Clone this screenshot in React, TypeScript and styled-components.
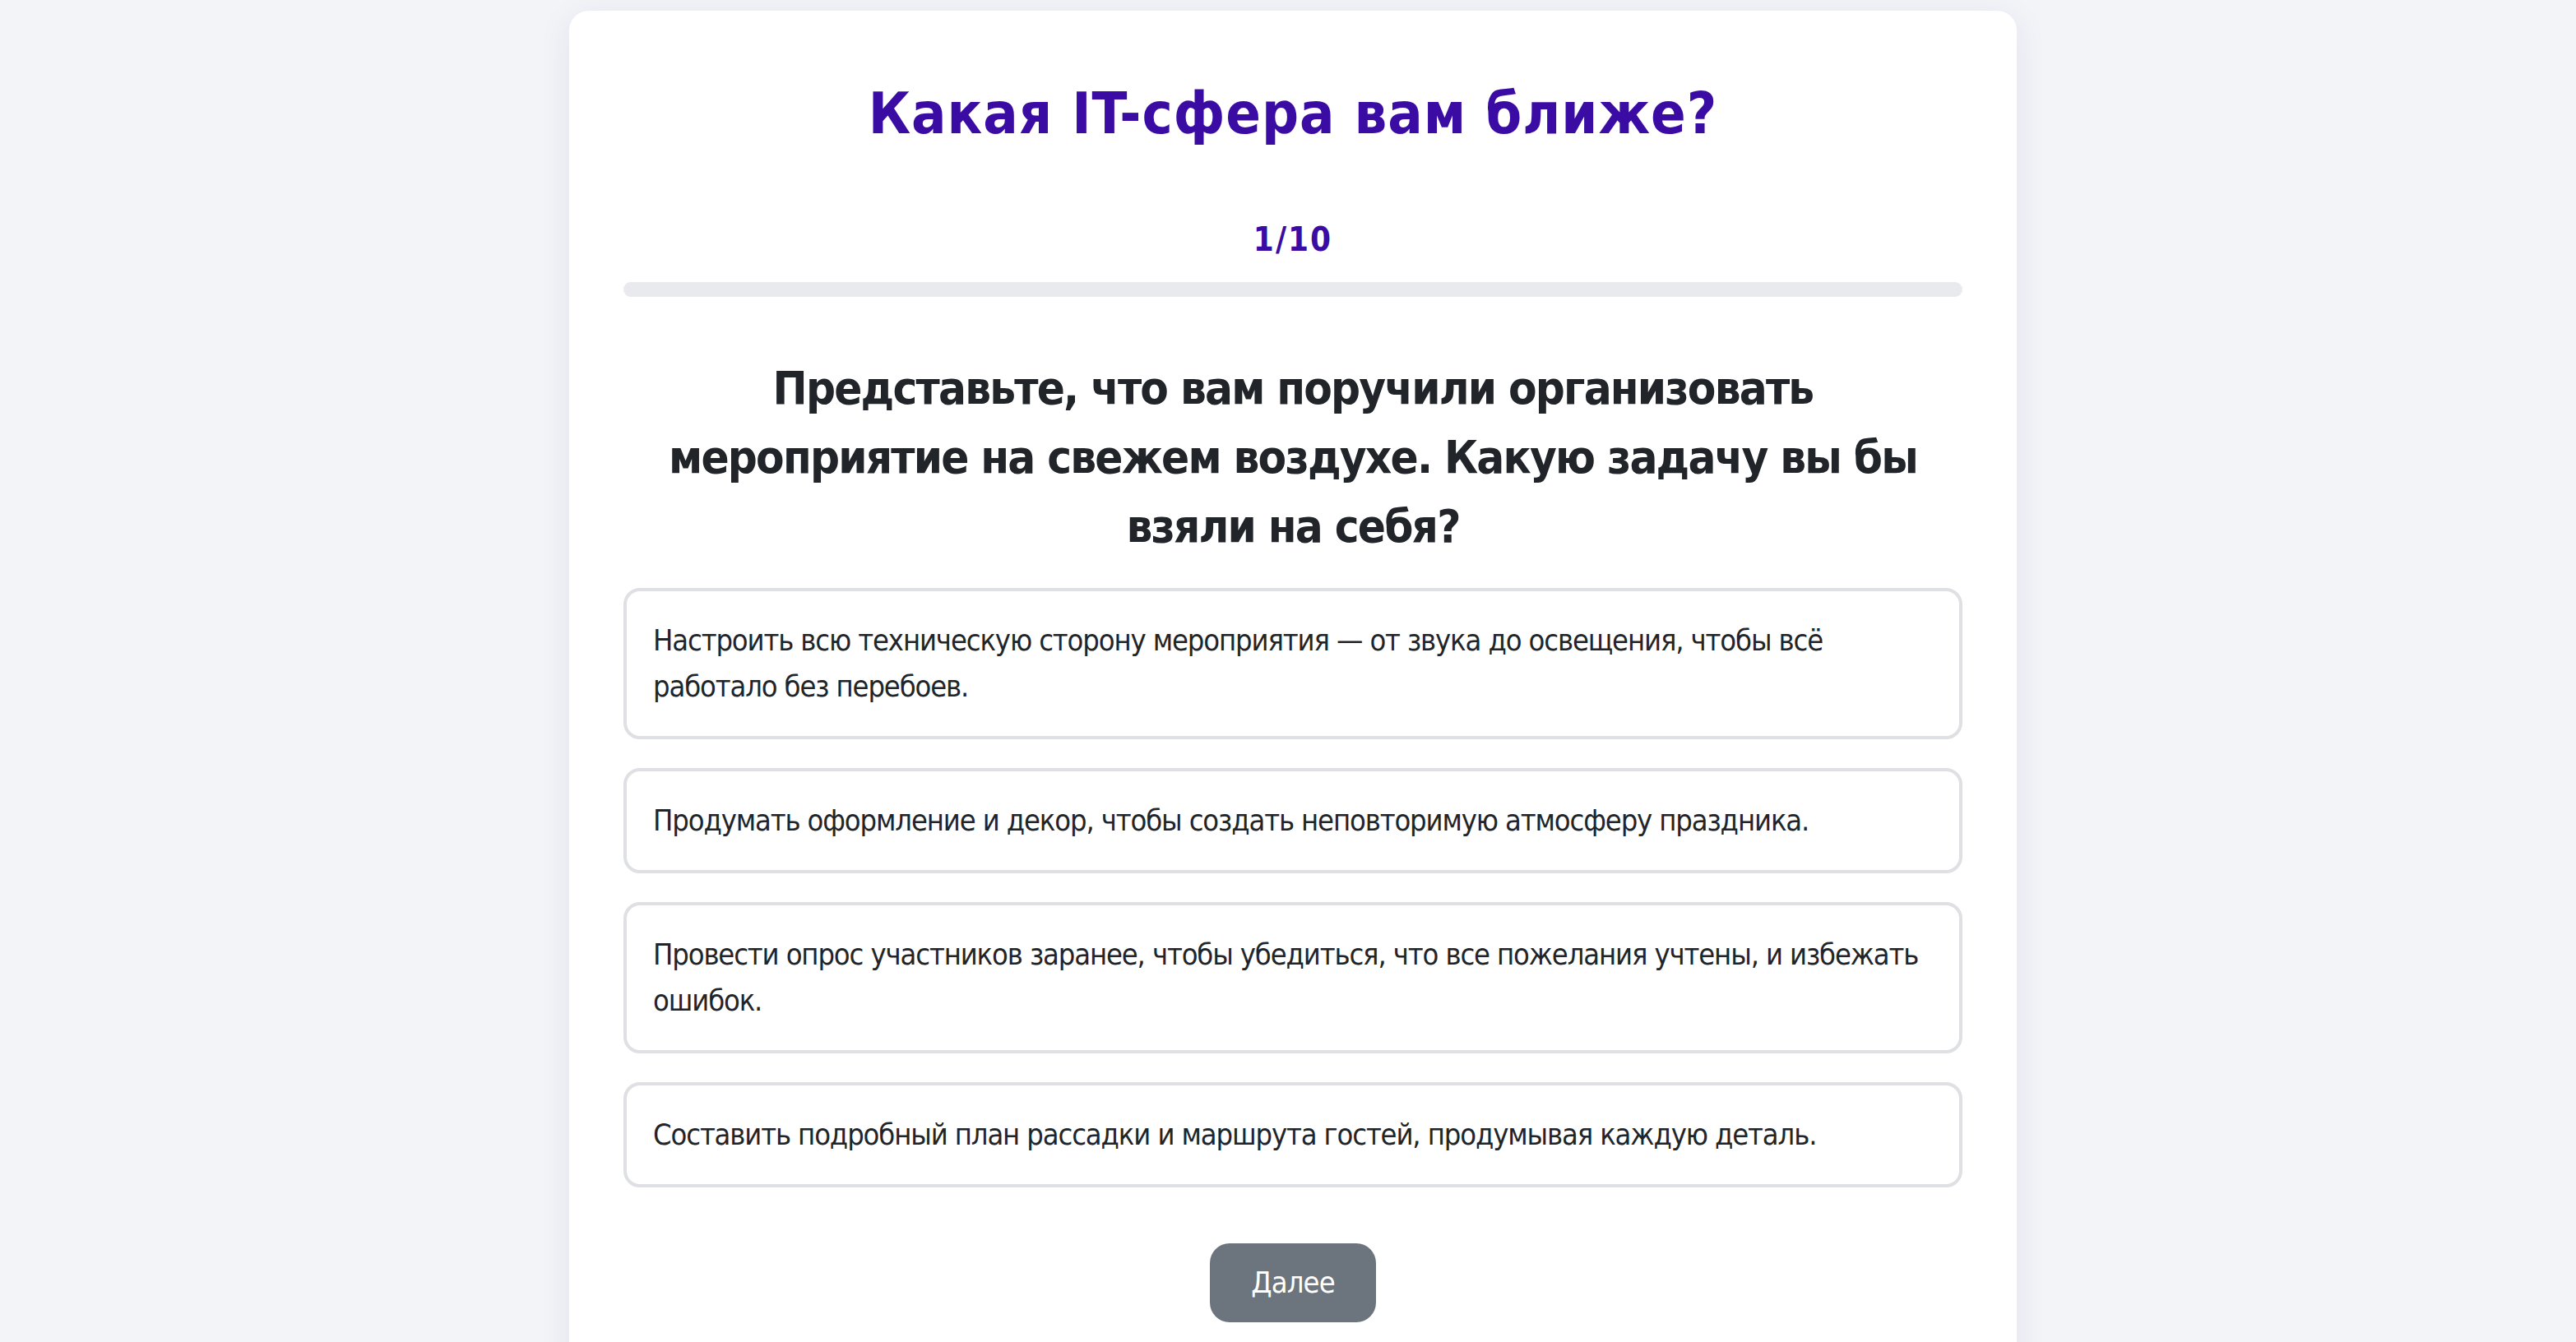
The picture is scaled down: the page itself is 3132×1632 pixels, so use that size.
import React, { useState } from "react";
import styled, { createGlobalStyle } from "styled-components";

const GlobalStyle = createGlobalStyle`
  html, body {
    margin: 0;
    padding: 0;
    background: #f3f4f8;
  }
  body {
    font-family: "DejaVu Sans Condensed", "DejaVu Sans", sans-serif;
    color: #212529;
  }
  * { box-sizing: border-box; }
`;

const Page = styled.div`
  display: flex;
  justify-content: center;
  padding: 13px 0 0 12px;
  min-height: 1632px;
`;

const Card = styled.main`
  width: 1760px;
  background: #ffffff;
  border-radius: 24px;
  box-shadow: 0 8px 40px rgba(30, 40, 80, 0.08);
  padding: 83px 66px 80px;
  display: flex;
  flex-direction: column;
  align-items: stretch;
`;

const Title = styled.h1`
  margin: 0;
  font-size: 70px;
  line-height: 84px;
  font-weight: 700;
  letter-spacing: 1px;
  color: #3a0ca3;
  text-align: center;
`;

const Counter = styled.div`
  margin-top: 87px;
  font-size: 40px;
  line-height: 48px;
  font-weight: 700;
  letter-spacing: 2px;
  color: #3a0ca3;
  text-align: center;
`;

const Track = styled.div`
  margin-top: 28px;
  height: 18px;
  border-radius: 9px;
  background: #e9eaee;
  overflow: hidden;
`;

const Fill = styled.div`
  height: 100%;
  background: #3a0ca3;
  border-radius: 9px;
`;

const Question = styled.h2`
  margin: 69px 0 0;
  padding: 0 20px;
  font-size: 56px;
  line-height: 84px;
  font-weight: 700;
  letter-spacing: -1.8px;
  color: #212529;
  text-align: center;
`;

const Options = styled.div`
  margin-top: 33px;
  display: flex;
  flex-direction: column;
  gap: 35px;
`;

const Option = styled.button<{ $selected: boolean }>`
  display: block;
  width: 100%;
  text-align: left;
  font-family: inherit;
  font-size: 36px;
  line-height: 56px;
  letter-spacing: -1.12px;
  color: #212529;
  background: ${(p) => (p.$selected ? "#f1edfb" : "#ffffff")};
  border: 4px solid ${(p) => (p.$selected ? "#3a0ca3" : "#dfe0e4")};
  border-radius: 20px;
  padding: 32px 24px 32px 32px;
  cursor: pointer;
`;

const Footer = styled.div`
  margin-top: 68px;
  display: flex;
  justify-content: center;
`;

const NextButton = styled.button`
  font-family: inherit;
  font-size: 36px;
  line-height: 48px;
  letter-spacing: -0.8px;
  padding: 24px 50px;
  color: #ffffff;
  background: #6c757d;
  border: none;
  border-radius: 24px;
  cursor: pointer;
  &:disabled { cursor: default; }
`;

const answers = [
  "Настроить всю техническую сторону мероприятия — от звука до освещения, чтобы всё работало без перебоев.",
  "Продумать оформление и декор, чтобы создать неповторимую атмосферу праздника.",
  "Провести опрос участников заранее, чтобы убедиться, что все пожелания учтены, и избежать ошибок.",
  "Составить подробный план рассадки и маршрута гостей, продумывая каждую деталь.",
];

export default function App() {
  const [selected, setSelected] = useState<number | null>(null);
  const step = 1;
  const total = 10;
  const progress = ((step - 1) / total) * 100;

  return (
    <>
      <GlobalStyle />
      <Page>
        <Card>
          <Title>Какая IT-сфера вам ближе?</Title>
          <Counter>
            {step}/{total}
          </Counter>
          <Track>
            <Fill style={{ width: `${progress}%` }} />
          </Track>
          <Question>
            Представьте, что вам поручили организовать мероприятие на свежем
            воздухе. Какую задачу вы бы взяли на себя?
          </Question>
          <Options>
            {answers.map((text, i) => (
              <Option
                key={i}
                $selected={selected === i}
                onClick={() => setSelected(i)}
              >
                {text}
              </Option>
            ))}
          </Options>
          <Footer>
            <NextButton disabled={selected === null}>Далее</NextButton>
          </Footer>
        </Card>
      </Page>
    </>
  );
}
